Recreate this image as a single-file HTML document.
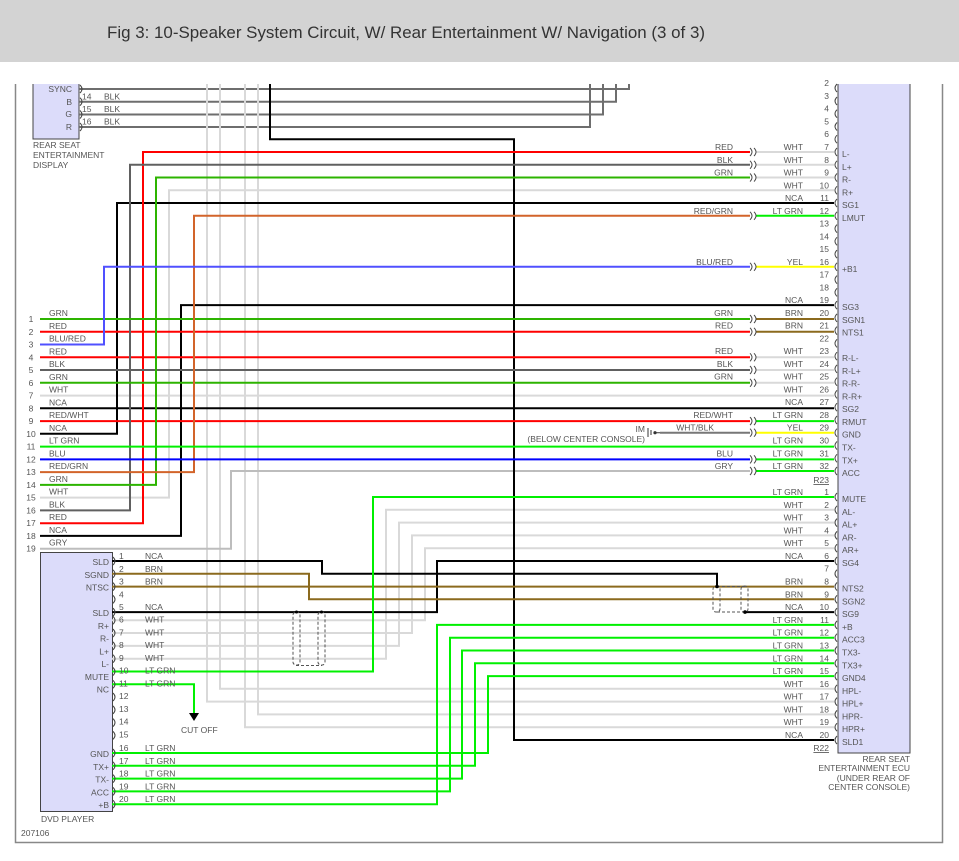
<!DOCTYPE html>
<html><head><meta charset="utf-8"><style>
html,body{margin:0;padding:0;background:#fff;}
svg{display:block;font-family:"Liberation Sans",Arial,sans-serif;}
.w{fill:none;stroke-width:2}
.t{font-size:8.5px;fill:#555}
.e{text-anchor:end}
.m{text-anchor:middle}
.c{fill:none;stroke:#444;stroke-width:1}
</style></head><body>
<svg width="959" height="861" viewBox="0 0 959 861" xmlns="http://www.w3.org/2000/svg">
<rect x="0" y="0" width="959" height="62" fill="#d3d3d3"/>
<text x="107" y="38" font-size="17" fill="#333" textLength="598" lengthAdjust="spacingAndGlyphs">Fig 3: 10-Speaker System Circuit, W/ Rear Entertainment W/ Navigation (3 of 3)</text>

<!-- frame -->
<path d="M15.5 84 V842.5 H942.5 V84" fill="none" stroke="#888" stroke-width="1.5"/>

<!-- boxes -->
<rect x="838" y="80" width="72" height="673" fill="#dcdcfa" stroke="#444" stroke-width="1"/>
<rect x="33" y="80" width="46" height="59" fill="#dcdcfa" stroke="#444" stroke-width="1"/>
<rect x="40.5" y="552.5" width="72" height="259" fill="#dcdcfa" stroke="#444" stroke-width="1"/>
<rect x="0" y="62" width="959" height="22" fill="#fff"/>

<!-- display wires -->
<g class="w" stroke="#6e6e6e">
<path d="M79 89 H629 V84"/><path d="M79 101.7 H616 V84"/><path d="M79 114.5 H603 V84"/><path d="M79 127 H590 V84"/>
</g>
<!-- light gray long verticals -->
<g class="w" stroke="#d9d9d9">
<path d="M207 84 V701.6 H834"/><path d="M220 84 V688.8 H834"/><path d="M245 84 V727.2 H834"/><path d="M258 84 V714.4 H834"/>
<path d="M40 497.6 H169 V190.3 H834"/>
<path d="M40 395.6 H834"/>
<path d="M756 152 H834"/><path d="M756 164.8 H834"/><path d="M756 177.5 H834"/>
<path d="M756 357.3 H834"/><path d="M756 370 H834"/><path d="M756 382.8 H834"/>
<path d="M112 620.3 H425 V548.2 H834"/><path d="M112 633 H412 V535.4 H834"/><path d="M112 645.9 H399 V522.6 H834"/><path d="M112 658.7 H386 V509.8 H834"/>
</g>
<path class="w" stroke="#bdbdbd" d="M40 548.7 H231 V471 H750"/>
<path class="w" stroke="#777" d="M660 432.7 H750" stroke-width="1.5"/>

<g class="w" stroke="#000">
<path d="M270 84 V139.2 H514 V740 H834"/>
<path d="M40 433.8 H117 V203 H834"/>
<path d="M40 535.9 H181 V305.1 H834"/>
<path d="M40 408.3 H834"/>
<path d="M112 561 H322 V573.7 H717 V586.5"/>
<path d="M112 612.1 H437 V561 H834"/>
<path d="M745 612.1 H834"/>
</g>
<g class="w" stroke="#ff0000">
<path d="M40 523.2 H143 V152 H750"/><path d="M40 331.8 H750"/><path d="M40 357.3 H750"/><path d="M40 421.1 H750"/>
</g>
<g class="w" stroke="#606060">
<path d="M40 510.4 H130 V164.8 H750"/><path d="M40 370 H750"/>
</g>
<g class="w" stroke="#2db400">
<path d="M40 484.9 H156 V177.5 H750"/><path d="M40 319 H750"/><path d="M40 382.8 H750"/>
</g>
<path class="w" stroke="#d2642a" d="M40 472.1 H194 V215.8 H750"/>
<path class="w" stroke="#5050ff" d="M40 344.5 H104 V266.8 H750"/>
<path class="w" stroke="#0000ff" d="M40 459.4 H750"/>
<g class="w" stroke="#ffff00">
<path d="M756 266.8 H834"/><path d="M756 432.7 H834"/>
</g>
<g class="w" stroke="#8b6a1e">
<path d="M756 319 H834"/><path d="M756 331.8 H834"/>
<path d="M112 573.8 H309 V599.3 H834"/><path d="M112 586.6 H834"/>
</g>
<g class="w" stroke="#00f000">
<path d="M756 215.8 H834"/><path d="M756 421.1 H834"/><path d="M40 446.6 H834"/><path d="M756 459.4 H834"/><path d="M756 471 H834"/>
<path d="M112 671.5 H373 V497 H834"/>
<path d="M112 684.3 H194 V713"/>
<path d="M112 753 H488 V676.1 H834"/><path d="M112 765.8 H475 V663.3 H834"/><path d="M112 778.6 H462 V650.5 H834"/><path d="M112 791.4 H450 V637.7 H834"/><path d="M112 804.2 H437 V624.9 H834"/>
</g>
<polygon points="189,713 199,713 194,721" fill="#000"/>
<text class="t" x="181" y="733">CUT OFF</text>

<!-- shields -->
<g fill="none" stroke="#555" stroke-width="1" stroke-dasharray="3,2">
<rect x="293" y="612" width="7" height="53" rx="3"/><rect x="318" y="612" width="7" height="53" rx="3"/><path d="M296 665.5 H322"/>
<rect x="713" y="586" width="7" height="26" rx="3"/><rect x="741" y="586" width="7" height="26" rx="3"/><path d="M717 586.5 H745 M717 612 H745"/>
</g>
<circle cx="717" cy="586.5" r="1.8" fill="#000"/><circle cx="745" cy="612.1" r="1.8" fill="#000"/>
<circle cx="296.5" cy="612" r="1.5" fill="#000"/><circle cx="321.5" cy="612" r="1.5" fill="#000"/>

<!-- ground symbol -->
<path d="M648 428 V437 M651 430 V435 M654 432.7 H660" stroke="#333" stroke-width="1"/><circle cx="655" cy="432.7" r="1.6" fill="#333"/>
<text class="t e" x="645" y="432">IM</text>
<text class="t e" x="645" y="442">(BELOW CENTER CONSOLE)</text>

<!-- mid connectors -->
<g class="c">
<path d="M750 148 q4 4 0 8 M754 148 q4 4 0 8"/>
<path d="M750 160.8 q4 4 0 8 M754 160.8 q4 4 0 8"/>
<path d="M750 173.5 q4 4 0 8 M754 173.5 q4 4 0 8"/>
<path d="M750 211.8 q4 4 0 8 M754 211.8 q4 4 0 8"/>
<path d="M750 262.8 q4 4 0 8 M754 262.8 q4 4 0 8"/>
<path d="M750 315 q4 4 0 8 M754 315 q4 4 0 8"/>
<path d="M750 327.8 q4 4 0 8 M754 327.8 q4 4 0 8"/>
<path d="M750 353.3 q4 4 0 8 M754 353.3 q4 4 0 8"/>
<path d="M750 366 q4 4 0 8 M754 366 q4 4 0 8"/>
<path d="M750 378.8 q4 4 0 8 M754 378.8 q4 4 0 8"/>
<path d="M750 417.1 q4 4 0 8 M754 417.1 q4 4 0 8"/>
<path d="M750 428.7 q4 4 0 8 M754 428.7 q4 4 0 8"/>
<path d="M750 455.4 q4 4 0 8 M754 455.4 q4 4 0 8"/>
<path d="M750 467 q4 4 0 8 M754 467 q4 4 0 8"/>
</g>
<!-- ECU pin marks -->
<g class="c">
<path d="M837 84 q-4 4 0 8 M837 97 q-4 4 0 8 M837 109.7 q-4 4 0 8 M837 122.5 q-4 4 0 8 M837 135.2 q-4 4 0 8 M837 148 q-4 4 0 8 M837 160.8 q-4 4 0 8 M837 173.5 q-4 4 0 8 M837 186.3 q-4 4 0 8 M837 199 q-4 4 0 8 M837 211.8 q-4 4 0 8 M837 224.6 q-4 4 0 8 M837 237.3 q-4 4 0 8 M837 250.1 q-4 4 0 8 M837 262.8 q-4 4 0 8 M837 275.6 q-4 4 0 8 M837 288.4 q-4 4 0 8 M837 301.1 q-4 4 0 8 M837 313.9 q-4 4 0 8 M837 326.6 q-4 4 0 8 M837 339.4 q-4 4 0 8 M837 352.2 q-4 4 0 8 M837 364.9 q-4 4 0 8 M837 377.7 q-4 4 0 8 M837 390.4 q-4 4 0 8 M837 403.2 q-4 4 0 8 M837 416 q-4 4 0 8 M837 428.7 q-4 4 0 8 M837 441.5 q-4 4 0 8 M837 454.3 q-4 4 0 8 M837 467 q-4 4 0 8"/>
<path d="M837 493 q-4 4 0 8 M837 505.8 q-4 4 0 8 M837 518.6 q-4 4 0 8 M837 531.4 q-4 4 0 8 M837 544.2 q-4 4 0 8 M837 557 q-4 4 0 8 M837 569.7 q-4 4 0 8 M837 582.5 q-4 4 0 8 M837 595.3 q-4 4 0 8 M837 608.1 q-4 4 0 8 M837 620.9 q-4 4 0 8 M837 633.7 q-4 4 0 8 M837 646.5 q-4 4 0 8 M837 659.3 q-4 4 0 8 M837 672.1 q-4 4 0 8 M837 684.8 q-4 4 0 8 M837 697.6 q-4 4 0 8 M837 710.4 q-4 4 0 8 M837 723.2 q-4 4 0 8 M837 736 q-4 4 0 8"/>
<!-- DVD marks -->
<path d="M113 557 q4 4 0 8 M113 569.8 q4 4 0 8 M113 582.6 q4 4 0 8 M113 595.4 q4 4 0 8 M113 608.1 q4 4 0 8 M113 616.3 q4 4 0 8 M113 629 q4 4 0 8 M113 641.9 q4 4 0 8 M113 654.7 q4 4 0 8 M113 667.5 q4 4 0 8 M113 680.3 q4 4 0 8 M113 693 q4 4 0 8 M113 705.9 q4 4 0 8 M113 718.6 q4 4 0 8 M113 731.4 q4 4 0 8 M113 749 q4 4 0 8 M113 761.8 q4 4 0 8 M113 774.6 q4 4 0 8 M113 787.4 q4 4 0 8 M113 800.2 q4 4 0 8"/>
<path d="M80 85 q4 4 0 8 M80 97.7 q4 4 0 8 M80 110.5 q4 4 0 8 M80 123 q4 4 0 8"/>
</g>

<!-- display labels -->
<g class="t">
<text class="e" x="72" y="92">SYNC</text><text class="e" x="72" y="105">B</text><text class="e" x="72" y="117">G</text><text class="e" x="72" y="130">R</text>
<text x="82" y="99.5">14</text><text x="104" y="99.5">BLK</text>
<text x="82" y="112">15</text><text x="104" y="112">BLK</text>
<text x="82" y="124.5">16</text><text x="104" y="124.5">BLK</text>
<text x="33" y="148">REAR SEAT</text><text x="33" y="158">ENTERTAINMENT</text><text x="33" y="168">DISPLAY</text>
</g>

<!-- left connector labels -->
<g class="t">
<g class="m">
<text x="31" y="322">1</text><text x="31" y="334.8">2</text><text x="31" y="347.5">3</text><text x="31" y="360.3">4</text><text x="31" y="373">5</text><text x="31" y="385.8">6</text><text x="31" y="398.6">7</text><text x="31" y="411.3">8</text><text x="31" y="424.1">9</text><text x="31" y="436.8">10</text><text x="31" y="449.6">11</text><text x="31" y="462.4">12</text><text x="31" y="475.1">13</text><text x="31" y="487.9">14</text><text x="31" y="500.6">15</text><text x="31" y="513.4">16</text><text x="31" y="526.2">17</text><text x="31" y="538.9">18</text><text x="31" y="551.7">19</text>
</g>
<text x="49" y="316">GRN</text><text x="49" y="328.8">RED</text><text x="49" y="341.5">BLU/RED</text><text x="49" y="354.3">RED</text><text x="49" y="367">BLK</text><text x="49" y="379.8">GRN</text><text x="49" y="392.6">WHT</text><text x="49" y="405.3">NCA</text><text x="49" y="418.1">RED/WHT</text><text x="49" y="430.8">NCA</text><text x="49" y="443.6">LT GRN</text><text x="49" y="456.4">BLU</text><text x="49" y="469.1">RED/GRN</text><text x="49" y="481.9">GRN</text><text x="49" y="494.6">WHT</text><text x="49" y="507.4">BLK</text><text x="49" y="520.2">RED</text><text x="49" y="532.9">NCA</text><text x="49" y="545.7">GRY</text>
</g>

<!-- DVD labels -->
<g class="t">
<g class="e">
<text x="109" y="565">SLD</text><text x="109" y="578">SGND</text><text x="109" y="590.6">NTSC</text><text x="109" y="616">SLD</text><text x="109" y="629">R+</text><text x="109" y="641.5">R-</text><text x="109" y="654.5">L+</text><text x="109" y="667">L-</text><text x="109" y="680">MUTE</text><text x="109" y="692.5">NC</text><text x="109" y="757">GND</text><text x="109" y="770">TX+</text><text x="109" y="782.5">TX-</text><text x="109" y="795.5">ACC</text><text x="109" y="808">+B</text>
</g>
<text x="119" y="559">1</text><text x="119" y="572">2</text><text x="119" y="584.5">3</text><text x="119" y="597.3">4</text><text x="119" y="610">5</text><text x="119" y="622.5">6</text><text x="119" y="635.5">7</text><text x="119" y="648">8</text><text x="119" y="661">9</text><text x="119" y="673.5">10</text><text x="119" y="686.5">11</text><text x="119" y="699">12</text><text x="119" y="712">13</text><text x="119" y="724.5">14</text><text x="119" y="737.5">15</text><text x="119" y="751">16</text><text x="119" y="763.8">17</text><text x="119" y="776.6">18</text><text x="119" y="789.4">19</text><text x="119" y="802.2">20</text>
<text x="145" y="559">NCA</text><text x="145" y="572">BRN</text><text x="145" y="584.5">BRN</text><text x="145" y="610">NCA</text><text x="145" y="622.5">WHT</text><text x="145" y="635.5">WHT</text><text x="145" y="648">WHT</text><text x="145" y="661">WHT</text><text x="145" y="673.5">LT GRN</text><text x="145" y="686.5">LT GRN</text><text x="145" y="751">LT GRN</text><text x="145" y="763.8">LT GRN</text><text x="145" y="776.6">LT GRN</text><text x="145" y="789.4">LT GRN</text><text x="145" y="802.2">LT GRN</text>
<text x="41" y="822">DVD PLAYER</text>
<text x="21" y="836">207106</text>
</g>

<!-- right labels R23 -->
<g class="t e">
<text x="829" y="86">2</text><text x="829" y="99">3</text><text x="829" y="111.7">4</text><text x="829" y="124.5">5</text><text x="829" y="137.2">6</text><text x="829" y="150">7</text><text x="829" y="162.8">8</text><text x="829" y="175.5">9</text><text x="829" y="188.3">10</text><text x="829" y="201">11</text><text x="829" y="213.8">12</text><text x="829" y="226.6">13</text><text x="829" y="239.3">14</text><text x="829" y="252.1">15</text><text x="829" y="264.8">16</text><text x="829" y="277.6">17</text><text x="829" y="290.4">18</text><text x="829" y="303.1">19</text><text x="829" y="315.9">20</text><text x="829" y="328.6">21</text><text x="829" y="341.4">22</text><text x="829" y="354.2">23</text><text x="829" y="366.9">24</text><text x="829" y="379.7">25</text><text x="829" y="392.4">26</text><text x="829" y="405.2">27</text><text x="829" y="418">28</text><text x="829" y="430.7">29</text><text x="829" y="443.5">30</text><text x="829" y="456.3">31</text><text x="829" y="469">32</text>
<text x="803" y="150">WHT</text><text x="803" y="162.8">WHT</text><text x="803" y="175.5">WHT</text><text x="803" y="188.3">WHT</text><text x="803" y="201">NCA</text><text x="803" y="213.8">LT GRN</text><text x="803" y="264.8">YEL</text><text x="803" y="303.1">NCA</text><text x="803" y="315.9">BRN</text><text x="803" y="328.6">BRN</text><text x="803" y="354.2">WHT</text><text x="803" y="366.9">WHT</text><text x="803" y="379.7">WHT</text><text x="803" y="392.4">WHT</text><text x="803" y="405.2">NCA</text><text x="803" y="418">LT GRN</text><text x="803" y="430.7">YEL</text><text x="803" y="443.5">LT GRN</text><text x="803" y="456.3">LT GRN</text><text x="803" y="469">LT GRN</text>
<text x="733" y="150">RED</text><text x="733" y="162.8">BLK</text><text x="733" y="175.5">GRN</text><text x="733" y="213.8">RED/GRN</text><text x="733" y="264.8">BLU/RED</text><text x="733" y="315.9">GRN</text><text x="733" y="328.6">RED</text><text x="733" y="354.2">RED</text><text x="733" y="366.9">BLK</text><text x="733" y="379.7">GRN</text><text x="733" y="418">RED/WHT</text><text x="714" y="430.7">WHT/BLK</text><text x="733" y="456.3">BLU</text><text x="733" y="469">GRY</text>
<text x="829" y="483" text-decoration="underline">R23</text>
<!-- R22 -->
<text x="829" y="495">1</text><text x="829" y="507.8">2</text><text x="829" y="520.6">3</text><text x="829" y="533.4">4</text><text x="829" y="546.2">5</text><text x="829" y="559">6</text><text x="829" y="571.7">7</text><text x="829" y="584.5">8</text><text x="829" y="597.3">9</text><text x="829" y="610.1">10</text><text x="829" y="622.9">11</text><text x="829" y="635.7">12</text><text x="829" y="648.5">13</text><text x="829" y="661.3">14</text><text x="829" y="674.1">15</text><text x="829" y="686.8">16</text><text x="829" y="699.6">17</text><text x="829" y="712.4">18</text><text x="829" y="725.2">19</text><text x="829" y="738">20</text>
<text x="803" y="495">LT GRN</text><text x="803" y="507.8">WHT</text><text x="803" y="520.6">WHT</text><text x="803" y="533.4">WHT</text><text x="803" y="546.2">WHT</text><text x="803" y="559">NCA</text><text x="803" y="584.5">BRN</text><text x="803" y="597.3">BRN</text><text x="803" y="610.1">NCA</text><text x="803" y="622.9">LT GRN</text><text x="803" y="635.7">LT GRN</text><text x="803" y="648.5">LT GRN</text><text x="803" y="661.3">LT GRN</text><text x="803" y="674.1">LT GRN</text><text x="803" y="686.8">WHT</text><text x="803" y="699.6">WHT</text><text x="803" y="712.4">WHT</text><text x="803" y="725.2">WHT</text><text x="803" y="738">NCA</text>
<text x="829" y="751" text-decoration="underline">R22</text>
<text x="910" y="762">REAR SEAT</text><text x="910" y="771">ENTERTAINMENT ECU</text><text x="910" y="781">(UNDER REAR OF</text><text x="910" y="790">CENTER CONSOLE)</text>
</g>
<!-- ECU pin names -->
<g class="t">
<text x="842" y="157">L-</text><text x="842" y="170">L+</text><text x="842" y="182.5">R-</text><text x="842" y="195.3">R+</text><text x="842" y="208">SG1</text><text x="842" y="221">LMUT</text><text x="842" y="272">+B1</text><text x="842" y="310">SG3</text><text x="842" y="323">SGN1</text><text x="842" y="335.6">NTS1</text><text x="842" y="361">R-L-</text><text x="842" y="374">R-L+</text><text x="842" y="386.7">R-R-</text><text x="842" y="399.4">R-R+</text><text x="842" y="412">SG2</text><text x="842" y="425">RMUT</text><text x="842" y="437.7">GND</text><text x="842" y="450.5">TX-</text><text x="842" y="463.3">TX+</text><text x="842" y="476">ACC</text>
<text x="842" y="502">MUTE</text><text x="842" y="515">AL-</text><text x="842" y="527.6">AL+</text><text x="842" y="540.4">AR-</text><text x="842" y="553.2">AR+</text><text x="842" y="566">SG4</text><text x="842" y="591.5">NTS2</text><text x="842" y="604.3">SGN2</text><text x="842" y="617">SG9</text><text x="842" y="630">+B</text><text x="842" y="642.7">ACC3</text><text x="842" y="655.5">TX3-</text><text x="842" y="668.3">TX3+</text><text x="842" y="681">GND4</text><text x="842" y="694">HPL-</text><text x="842" y="706.6">HPL+</text><text x="842" y="719.4">HPR-</text><text x="842" y="732.2">HPR+</text><text x="842" y="745">SLD1</text>
</g>
</svg>
</body></html>
